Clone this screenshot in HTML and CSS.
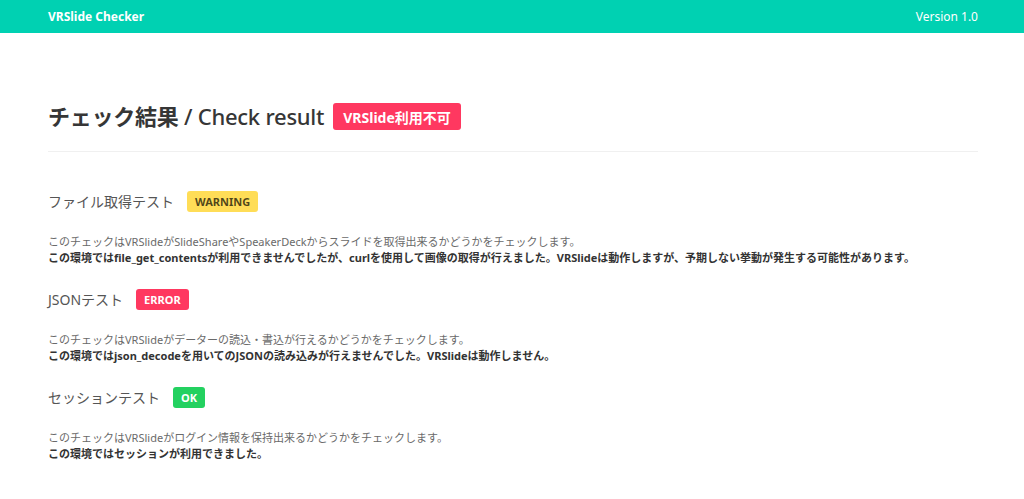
FILE: index.html
```html
<!DOCTYPE html>
<html lang="ja">
<head>
<meta charset="utf-8">
<title>VRSlide Checker</title>
<link rel="stylesheet" href="styles.css">
</head>
<body>
<nav class="navbar">
  <div class="container navbar-inner">
    <span class="brand">VRSlide Checker</span>
    <span class="version">Version 1.0</span>
  </div>
</nav>
<main class="container main">
  <div class="title-row">
    <h1 class="title"><span class="title-ja">チェック結果</span> / Check result</h1>
    <span class="tag tag-large tag-danger">VRSlide利用不可</span>
  </div>
  <hr class="divider">
  <section class="check">
    <div class="check-head">
      <h2 class="check-title">ファイル取得テスト</h2>
      <span class="tag tag-warning">WARNING</span>
    </div>
    <p class="check-desc">このチェックはVRSlideがSlideShareやSpeakerDeckからスライドを取得出来るかどうかをチェックします。<br><strong>この環境ではfile_get_contentsが利用できませんでしたが、curlを使用して画像の取得が行えました。VRSlideは動作しますが、予期しない挙動が発生する可能性があります。</strong></p>
  </section>
  <section class="check">
    <div class="check-head">
      <h2 class="check-title">JSONテスト</h2>
      <span class="tag tag-danger">ERROR</span>
    </div>
    <p class="check-desc">このチェックはVRSlideがデーターの読込・書込が行えるかどうかをチェックします。<br><strong>この環境ではjson_decodeを用いてのJSONの読み込みが行えませんでした。VRSlideは動作しません。</strong></p>
  </section>
  <section class="check">
    <div class="check-head">
      <h2 class="check-title">セッションテスト</h2>
      <span class="tag tag-success">OK</span>
    </div>
    <p class="check-desc">このチェックはVRSlideがログイン情報を保持出来るかどうかをチェックします。<br><strong>この環境ではセッションが利用できました。</strong></p>
  </section>
</main>
</body>
</html>
```
FILE: styles.css
```css
html, body {
  margin: 0;
  padding: 0;
  background: #ffffff;
}
body {
  font-family: "Noto Sans", "Noto Sans CJK JP", sans-serif;
  color: #4a4a4a;
}
.container {
  margin: 0 46px 0 48px;
}
.navbar {
  background: #00d1b2;
  height: 33px;
  color: #ffffff;
  font-size: 12px;
}
.navbar-inner {
  height: 33px;
  display: flex;
  align-items: center;
  justify-content: space-between;
}
.brand {
  font-weight: 700;
}
.version {
  font-weight: 400;
}
.main {
  padding-top: 70px;
}
.title-row {
  display: flex;
  align-items: center;
  gap: 9px;
  height: 27px;
}
.title {
  margin: 0;
  font-size: 22px;
  font-weight: 500;
  color: #363636;
  line-height: 27px;
  letter-spacing: -0.25px;
}
.title-ja {
  font-weight: 700;
}
.tag {
  display: inline-flex;
  align-items: center;
  justify-content: center;
  height: 21px;
  padding: 0 8px;
  border-radius: 3px;
  font-size: 11px;
  font-weight: 700;
  color: #ffffff;
}
.tag-large {
  height: 27px;
  padding: 0 10px;
  font-size: 14px;
}
.tag-danger {
  background: #ff3860;
}
.tag-warning {
  background: #ffdd57;
  color: rgba(0, 0, 0, 0.7);
}
.tag-success {
  background: #23d160;
}
.divider {
  margin: 21px 0 0;
  border: 0;
  height: 1px;
  background: #f0f0f0;
}
.check:first-of-type {
  margin-top: 38px;
}
.check {
  margin-bottom: 22px;
}
.check-head {
  display: flex;
  align-items: center;
  gap: 13px;
  height: 22px;
}
.check-title {
  margin: 0;
  font-size: 14px;
  font-weight: 400;
  color: #555555;
}
.check-desc {
  margin: 22px 0 0;
  font-size: 11px;
  line-height: 16px;
  color: #6a6a6a;
}
.check-desc strong {
  font-weight: 700;
  color: #333333;
}
```
